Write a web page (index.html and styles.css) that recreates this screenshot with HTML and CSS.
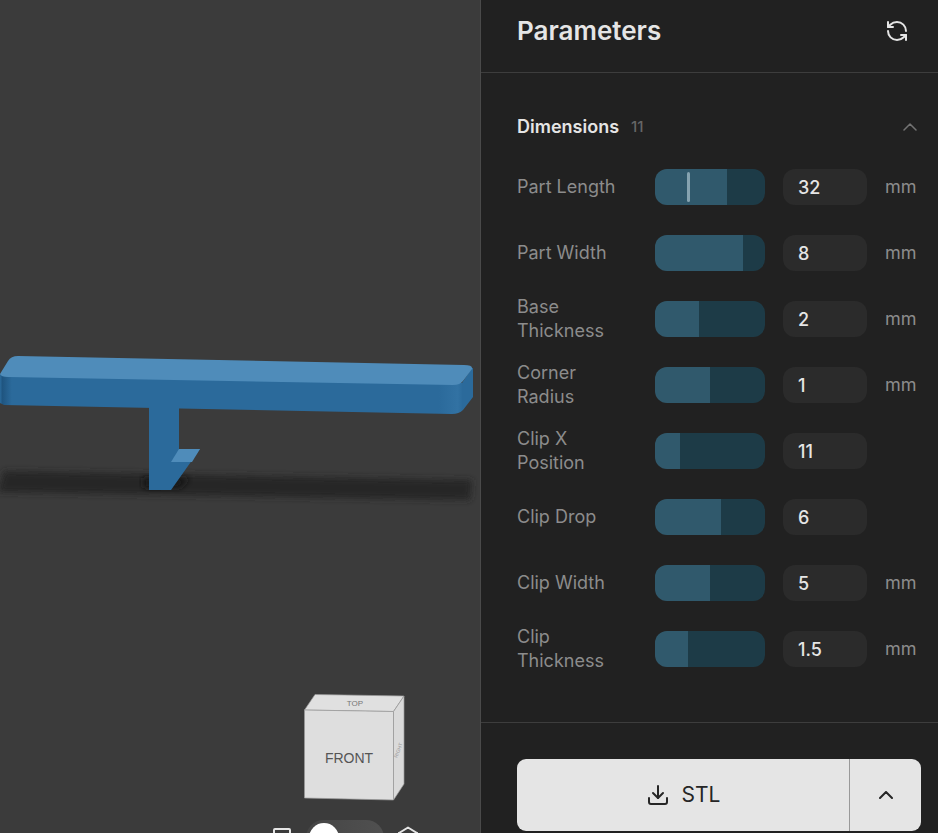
FILE: index.html
```
<!DOCTYPE html>
<html lang="en">
<head>
  <meta charset="UTF-8">
  <meta name="viewport" content="width=device-width, initial-scale=1.0">
  <title>Parameters</title>
  <link rel="stylesheet" href="styles.css">
</head>
<body>
  <div class="app">
    <main class="viewer">
      <svg class="model" viewBox="0 0 480 833" preserveAspectRatio="xMinYMid slice" role="img" aria-label="Part preview">
        <defs>
          <filter id="soft" x="-5%" y="-50%" width="110%" height="200%">
            <feGaussianBlur stdDeviation="3"/>
          </filter>
          <linearGradient id="frontFace" gradientUnits="userSpaceOnUse" x1="0" y1="0" x2="472" y2="0">
            <stop offset="0" stop-color="#2b6a9b"/>
            <stop offset="0.005" stop-color="#1f5580"/>
            <stop offset="0.025" stop-color="#2b6a9b"/>
            <stop offset="0.93" stop-color="#2b6a9b"/>
            <stop offset="0.97" stop-color="#3272a3"/>
            <stop offset="0.98" stop-color="#2b6a9b"/>
          </linearGradient>
        </defs>
        <!-- ground shadow -->
        <path d="M4 471 L472 480 L470 500 L-2 492 Z" fill="#252525" filter="url(#soft)"/>
        <path d="M142 478 L190 478 L180 488 L144 488 Z" fill="#161616" filter="url(#soft)"/>
        <!-- clip -->
        <path d="M149 404 H179 V449 H200 L171 490 H149 Z" fill="#2b6a9b"/>
        <path d="M179 449 H200 L192 462 H171 Z" fill="#4f8cba"/>
        <!-- base plate -->
        <path d="M0 374 L462 383 L472 368 H473 V397 L463 410 Q459 414 452 414 L4 405 L0 403 Z" fill="url(#frontFace)"/>
        <path d="M0 374 L8 361 Q11 356 18 356 L464 365 Q473 365 472 369 L463 381 Q460 385 453 385 L8 377 Q1 377 0 374 Z" fill="#4f8cba"/>
      </svg>

      <div class="view-tools">
        <svg class="cube" viewBox="0 0 150 126" role="img" aria-label="View cube">
          <g stroke="#999" stroke-width="0.7" stroke-linejoin="round">
            <path d="M34.500 16 L45 0.500 L134 2 L123.500 17.500 Z" fill="#e0e0e0"/>
            <path d="M34.500 16 L123.500 17.500 V106 L34.500 104 Z" fill="#dedede"/>
            <path d="M123.500 17.500 L134 2 V90 L123.500 106 Z" fill="#dadada"/>
          </g>
          <text class="face" x="79" y="69">FRONT</text>
          <text class="face-small" x="85" y="12">TOP</text>
          <text class="face-tiny" x="0" y="0" transform="translate(130 57) rotate(-70)">RIGHT</text>
        </svg>
        <div class="projection">
          <svg class="icon" viewBox="0 0 24 24"><rect x="4" y="3" width="16" height="18" rx="1"/></svg>
          <input class="switch" type="checkbox" aria-label="Perspective view">
          <svg class="icon" viewBox="0 0 24 24"><path d="M12 1.500 L21 7 V17 L12 22.500 L3 17 V7 Z"/><path d="M3 7 L12 12.500 L21 7 M12 12.500 V22.500"/></svg>
        </div>
      </div>
    </main>

    <aside class="panel">
      <header class="panel-header">
        <h1>Parameters</h1>
        <button class="icon-button" type="button" aria-label="Reset parameters">
          <svg class="icon" viewBox="0 0 24 24"><path d="M21 12a9 9 0 0 0-9-9 9.750 9.750 0 0 0-6.740 2.740L3 8"/><path d="M3 3v5h5"/><path d="M3 12a9 9 0 0 0 9 9 9.750 9.750 0 0 0 6.740-2.740L21 16"/><path d="M16 16h5v5"/></svg>
        </button>
      </header>

      <section class="group">
        <button class="group-header" type="button" aria-expanded="true">
          <span class="group-title">Dimensions</span>
          <span class="count">11</span>
          <svg class="chevron" viewBox="5 8 14 8"><path d="m18 15-6-6-6 6"/></svg>
        </button>

        <div class="rows">
          <div class="row">
            <label for="length">Part Length</label>
            <div class="slider">
              <input type="range" aria-label="Part Length slider" value="65" style="--fill: 65%">
              <span class="default-mark"></span>
            </div>
            <input class="value" id="length" type="text" inputmode="decimal" value="32">
            <span class="unit">mm</span>
          </div>
          <div class="row">
            <label for="width">Part Width</label>
            <div class="slider"><input type="range" aria-label="Part Width slider" value="80" style="--fill: 80%"></div>
            <input class="value" id="width" type="text" inputmode="decimal" value="8">
            <span class="unit">mm</span>
          </div>
          <div class="row">
            <label for="thickness">Base Thickness</label>
            <div class="slider"><input type="range" aria-label="Base Thickness slider" value="40" style="--fill: 40%"></div>
            <input class="value" id="thickness" type="text" inputmode="decimal" value="2">
            <span class="unit">mm</span>
          </div>
          <div class="row">
            <label for="radius">Corner Radius</label>
            <div class="slider"><input type="range" aria-label="Corner Radius slider" value="50" style="--fill: 50%"></div>
            <input class="value" id="radius" type="text" inputmode="decimal" value="1">
            <span class="unit">mm</span>
          </div>
          <div class="row">
            <label for="clip-x">Clip X Position</label>
            <div class="slider"><input type="range" aria-label="Clip X Position slider" value="23" style="--fill: 23%"></div>
            <input class="value" id="clip-x" type="text" inputmode="decimal" value="11">
          </div>
          <div class="row">
            <label for="clip-drop">Clip Drop</label>
            <div class="slider"><input type="range" aria-label="Clip Drop slider" value="60" style="--fill: 60%"></div>
            <input class="value" id="clip-drop" type="text" inputmode="decimal" value="6">
          </div>
          <div class="row">
            <label for="clip-width">Clip Width</label>
            <div class="slider"><input type="range" aria-label="Clip Width slider" value="50" style="--fill: 50%"></div>
            <input class="value" id="clip-width" type="text" inputmode="decimal" value="5">
            <span class="unit">mm</span>
          </div>
          <div class="row">
            <label for="clip-thickness">Clip Thickness</label>
            <div class="slider"><input type="range" aria-label="Clip Thickness slider" value="30" style="--fill: 30%"></div>
            <input class="value" id="clip-thickness" type="text" inputmode="decimal" value="1.5">
            <span class="unit">mm</span>
          </div>
        </div>
      </section>

      <footer class="panel-footer">
        <button class="download" type="button">
          <svg class="icon" viewBox="0 0 24 24"><path d="M21 15v4a2 2 0 0 1-2 2H5a2 2 0 0 1-2-2v-4"/><path d="m7 10 5 5 5-5"/><path d="M12 15V3"/></svg>
          STL
        </button>
        <button class="format" type="button" aria-label="Choose format">
          <svg class="chevron" viewBox="5 8 14 8"><path d="m18 15-6-6-6 6"/></svg>
        </button>
      </footer>
    </aside>
  </div>
</body>
</html>
```

FILE: styles.css
```
* {
  box-sizing: border-box;
}
body {
  margin: 0;
  font-family: Inter, "Liberation Sans", sans-serif;
  font-size: 18px;
  line-height: 24px;
  color: #e5e5e5;
  background: #212121;
}
button, input {
  font: inherit;
  color: inherit;
  margin: 0;
}
button {
  border: 0;
  padding: 0;
  background: none;
  cursor: pointer;
}
.app {
  display: grid;
  grid-template-columns: 1fr 458px;
  height: 100vh;
}

/* 3D view */
.viewer {
  position: relative;
  overflow: hidden;
  background: #3b3b3b;
}
.model {
  display: block;
  width: 100%;
  height: 100%;
}
.view-tools {
  position: absolute;
  right: 60px;
  bottom: -23px;
  width: 150px;
}
.cube {
  display: block;
  width: 100%;
}
.face, .face-small, .face-tiny {
  font-family: "Liberation Sans", Arial, sans-serif;
  text-anchor: middle;
  fill: #555;
}
.face {
  font-size: 14px;
}
.face-small {
  font-size: 8px;
  fill: #777;
}
.face-tiny {
  font-size: 5px;
  fill: #999;
}
.projection {
  display: flex;
  align-items: center;
  justify-content: space-between;
}
.switch {
  appearance: none;
  width: 78px;
  height: 36px;
  padding: 3px;
  border-radius: 18px;
  background: linear-gradient(90deg, #454545, #505050);
}
.switch::before {
  content: "";
  display: block;
  width: 30px;
  height: 30px;
  border-radius: 50%;
  background: #fff;
}
.switch:checked::before {
  margin-left: auto;
}
.icon, .chevron {
  flex: none;
  fill: none;
  stroke: currentColor;
  stroke-width: 2;
  stroke-linecap: round;
  stroke-linejoin: round;
}
.icon {
  display: block;
  width: 24px;
  height: 24px;
}
.chevron {
  width: 14px;
  height: 8px;
}

/* side panel */
.panel {
  display: flex;
  flex-direction: column;
  min-height: 0;
  border-left: 1px solid #4a4a4a;
  background: #212121;
}
.panel-header {
  display: flex;
  align-items: center;
  justify-content: space-between;
  padding: 13px 29px 23px 36px;
  border-bottom: 1px solid #3d3d3d;
}
h1 {
  margin: 0;
  font-size: 26px;
  line-height: 36px;
  font-weight: 600;
}
.group {
  flex: 1;
  min-height: 0;
  overflow: hidden;
  padding: 42px 21px 0 36px;
}
.group-header {
  display: flex;
  align-items: center;
  gap: 12px;
  width: 100%;
}
.group-title {
  font-weight: 600;
}
.count {
  font-size: 15px;
  font-weight: 500;
  color: #666;
}
.group-header .chevron {
  margin-left: auto;
  color: #737373;
  stroke-width: 1.5;
}
.rows {
  display: grid;
  gap: 18px;
  margin-top: 24px;
}
.row {
  display: grid;
  grid-template-columns: 120px 1fr 84px 32px;
  align-items: center;
  column-gap: 18px;
  height: 48px;
}
.row label {
  padding-right: 18px;
  color: #8c8c8c;
}
.unit {
  color: #8c8c8c;
}
.slider {
  position: relative;
  height: 36px;
}
.slider input {
  appearance: none;
  display: block;
  width: 100%;
  height: 36px;
  border-radius: 12px;
  background: linear-gradient(90deg, #30596c var(--fill), #1d3b47 var(--fill));
  cursor: ew-resize;
}
.slider input::-webkit-slider-thumb {
  appearance: none;
  width: 3px;
  height: 36px;
  background: transparent;
}
.default-mark {
  position: absolute;
  top: 3px;
  left: 29%;
  width: 3px;
  height: 30px;
  border-radius: 2px;
  background: #86a3b0;
  pointer-events: none;
}
.value {
  width: 100%;
  height: 36px;
  padding: 0 15px;
  border: 0;
  border-radius: 12px;
  background: #2b2b2b;
  font-weight: 500;
}
.panel-footer {
  display: flex;
  padding: 36px 17px 2px 36px;
  border-top: 1px solid #3d3d3d;
}
.download, .format {
  display: flex;
  align-items: center;
  justify-content: center;
  height: 72px;
  background: #e5e5e5;
  color: #262626;
}
.download {
  flex: 1;
  gap: 12px;
  border-radius: 9px 0 0 9px;
  font-size: 21px;
}
.format {
  width: 72px;
  border-left: 1px solid #999;
  border-radius: 0 9px 9px 0;
}
```
